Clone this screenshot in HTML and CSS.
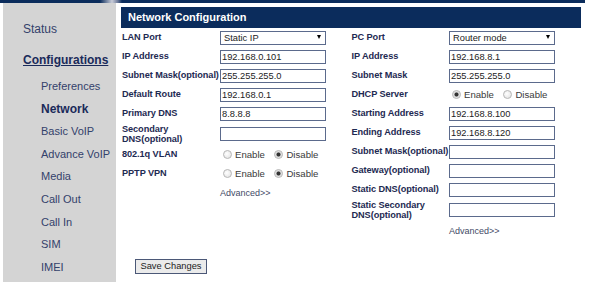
FILE: index.html
```html
<!DOCTYPE html>
<html lang="en">
<head>
    <meta charset="UTF-8">
    <title>Network Configuration</title>
    <link rel="stylesheet" href="styles.css">
</head>
<body>
    <div class="topline"></div>

    <div class="page">
        <nav class="sidebar">
            <a class="nav-top" href="#">Status</a>
            <a class="nav-section" href="#">Configurations</a>
            <ul class="nav-sub">
                <li><a href="#">Preferences</a></li>
                <li class="current"><a href="#">Network</a></li>
                <li><a href="#">Basic VoIP</a></li>
                <li><a href="#">Advance VoIP</a></li>
                <li><a href="#">Media</a></li>
                <li><a href="#">Call Out</a></li>
                <li><a href="#">Call In</a></li>
                <li><a href="#">SIM</a></li>
                <li><a href="#">IMEI</a></li>
            </ul>
        </nav>

        <main class="content">
            <h1 class="panel-title">Network Configuration</h1>

            <form class="net-form">
                <div class="columns">
                    <table class="cfg cfg-lan">
                        <tr>
                            <td class="lbl">LAN Port</td>
                            <td>
                                <span class="select-wrap">
                                    <select>
                                        <option>Static IP</option>
                                        <option>DHCP</option>
                                    </select>
                                </span>
                            </td>
                        </tr>
                        <tr>
                            <td class="lbl">IP Address</td>
                            <td><input type="text" value="192.168.0.101"></td>
                        </tr>
                        <tr>
                            <td class="lbl">Subnet Mask(optional)</td>
                            <td><input type="text" value="255.255.255.0"></td>
                        </tr>
                        <tr>
                            <td class="lbl">Default Route</td>
                            <td><input type="text" value="192.168.0.1"></td>
                        </tr>
                        <tr>
                            <td class="lbl">Primary DNS</td>
                            <td><input type="text" value="8.8.8.8"></td>
                        </tr>
                        <tr class="tall">
                            <td class="lbl">Secondary<br>DNS(optional)</td>
                            <td><input type="text" value=""></td>
                        </tr>
                        <tr>
                            <td class="lbl">802.1q VLAN</td>
                            <td class="radios">
                                <label><input type="radio" name="vlan">Enable</label>
                                <label><input type="radio" name="vlan" checked>Disable</label>
                            </td>
                        </tr>
                        <tr>
                            <td class="lbl">PPTP VPN</td>
                            <td class="radios">
                                <label><input type="radio" name="pptp">Enable</label>
                                <label><input type="radio" name="pptp" checked>Disable</label>
                            </td>
                        </tr>
                        <tr>
                            <td></td>
                            <td><a class="adv" href="#">Advanced&gt;&gt;</a></td>
                        </tr>
                    </table>

                    <table class="cfg cfg-pc">
                        <tr>
                            <td class="lbl">PC Port</td>
                            <td>
                                <span class="select-wrap">
                                    <select>
                                        <option>Router mode</option>
                                        <option>Bridge mode</option>
                                    </select>
                                </span>
                            </td>
                        </tr>
                        <tr>
                            <td class="lbl">IP Address</td>
                            <td><input type="text" value="192.168.8.1"></td>
                        </tr>
                        <tr>
                            <td class="lbl">Subnet Mask</td>
                            <td><input type="text" value="255.255.255.0"></td>
                        </tr>
                        <tr>
                            <td class="lbl">DHCP Server</td>
                            <td class="radios">
                                <label><input type="radio" name="dhcp" checked>Enable</label>
                                <label><input type="radio" name="dhcp">Disable</label>
                            </td>
                        </tr>
                        <tr>
                            <td class="lbl">Starting Address</td>
                            <td><input type="text" value="192.168.8.100"></td>
                        </tr>
                        <tr>
                            <td class="lbl">Ending Address</td>
                            <td><input type="text" value="192.168.8.120"></td>
                        </tr>
                        <tr>
                            <td class="lbl">Subnet Mask(optional)</td>
                            <td><input type="text" value=""></td>
                        </tr>
                        <tr>
                            <td class="lbl">Gateway(optional)</td>
                            <td><input type="text" value=""></td>
                        </tr>
                        <tr>
                            <td class="lbl">Static DNS(optional)</td>
                            <td><input type="text" value=""></td>
                        </tr>
                        <tr class="tall">
                            <td class="lbl">Static Secondary<br>DNS(optional)</td>
                            <td><input type="text" value=""></td>
                        </tr>
                        <tr>
                            <td></td>
                            <td><a class="adv" href="#">Advanced&gt;&gt;</a></td>
                        </tr>
                    </table>
                </div>

                <div class="actions">
                    <button type="button" class="save">Save Changes</button>
                </div>
            </form>
        </main>
    </div>
</body>
</html>
```

FILE: styles.css
```css
/* Reset */
* {
    margin: 0;
    padding: 0;
    box-sizing: border-box;
}

body {
    font-family: "Liberation Sans", Arial, sans-serif;
    background-color: #fff;
    color: #1e2a52;
}

/* top strip */
.topline {
    width: 585px;
    height: 3px;
    background: linear-gradient(to right, #0b2c5c 0, #0b2c5c 100px, #c9ccd8 112px, #6a7898 118px, #0b2c5c 122px);
}

.page {
    display: flex;
    height: 279px;
}

/* Sidebar */
.sidebar {
    width: 113px;
    margin-left: 3px;
    background-color: #d4d4d4;
}

.sidebar a {
    text-decoration: none;
    color: #33416b;
}

.nav-top {
    display: block;
    margin: 19px 0 0 20px;
    font-size: 12px;
    line-height: 14px;
}

.nav-section {
    display: block;
    margin: 17px 0 0 20px;
    font-size: 12px;
    line-height: 14px;
    font-weight: bold;
}

.sidebar .nav-section {
    color: #1a2a5a;
    text-decoration: underline;
}

.nav-sub {
    list-style: none;
    margin-top: 8px;
    padding-left: 38px;
}

.nav-sub li {
    font-size: 11px;
    line-height: 22.6px;
}

.nav-sub li.current {
    font-size: 12px;
    font-weight: bold;
}

.nav-sub li.current a {
    color: #1a2a5a;
}

/* Content */
.content {
    flex: 1;
    padding: 4px 0 0 5px;
}

.panel-title {
    width: 460px;
    height: 21px;
    padding-left: 7px;
    background-color: #0b2c5c;
    color: #fff;
    font-size: 11px;
    line-height: 21px;
    font-weight: bold;
}

.columns {
    display: flex;
    align-items: flex-start;
}

.cfg {
    border-collapse: collapse;
    table-layout: fixed;
    font-size: 9.2px;
}

.cfg-lan {
    width: 229px;
}

.cfg-pc {
    width: 215px;
}

.cfg td {
    height: 19px;
    padding: 0;
    vertical-align: middle;
    white-space: nowrap;
}

.cfg tr.tall td {
    height: 22px;
}

.cfg td.lbl {
    width: 99px;
    padding-left: 1px;
    font-weight: bold;
    line-height: 10.5px;
    letter-spacing: -0.08px;
    color: #1e2a52;
}

.cfg-pc td.lbl {
    padding-left: 1.5px;
}

.cfg input[type="text"],
.cfg select {
    display: block;
    width: 106px;
    height: 14px;
    border: 1px solid #5b6a8c;
    background-color: #fff;
    font-family: "Liberation Sans", Arial, sans-serif;
    font-size: 9.3px;
    color: #222;
    padding: 0 0 0 1px;
    outline: none;
}

.cfg select {
    appearance: none;
    -webkit-appearance: none;
    padding-left: 3px;
    border-radius: 0;
}

.select-wrap {
    position: relative;
    display: block;
    width: 106px;
}

.select-wrap::after {
    content: "";
    position: absolute;
    right: 5px;
    top: 4px;
    border-left: 2.5px solid transparent;
    border-right: 2.5px solid transparent;
    border-top: 4px solid #000;
}

/* radio pairs */
.radios label {
    display: inline-flex;
    align-items: center;
    font-size: 9.6px;
    color: #3a3a3a;
    margin-right: 4px;
}

.radios input[type="radio"] {
    appearance: none;
    -webkit-appearance: none;
    width: 9px;
    height: 9px;
    margin: 0 3px 0 3px;
    border: 1px solid #b8b8b8;
    border-radius: 50%;
    background: radial-gradient(circle at 40% 40%, #fff, #dedede);
}

.radios input[type="radio"]:checked {
    background: radial-gradient(circle, #333 0 1.6px, #d6d6d6 2.4px, #f2f2f2 4px);
}

.adv {
    font-size: 9px;
    color: #434a66;
    text-decoration: none;
}

.actions {
    margin: 15px 0 0 14px;
}

.save {
    width: 72px;
    height: 15px;
    border: 1px solid #4b5877;
    background-color: #ebebeb;
    font-family: "Liberation Sans", Arial, sans-serif;
    font-size: 9.3px;
    color: #222;
    cursor: pointer;
}
```
